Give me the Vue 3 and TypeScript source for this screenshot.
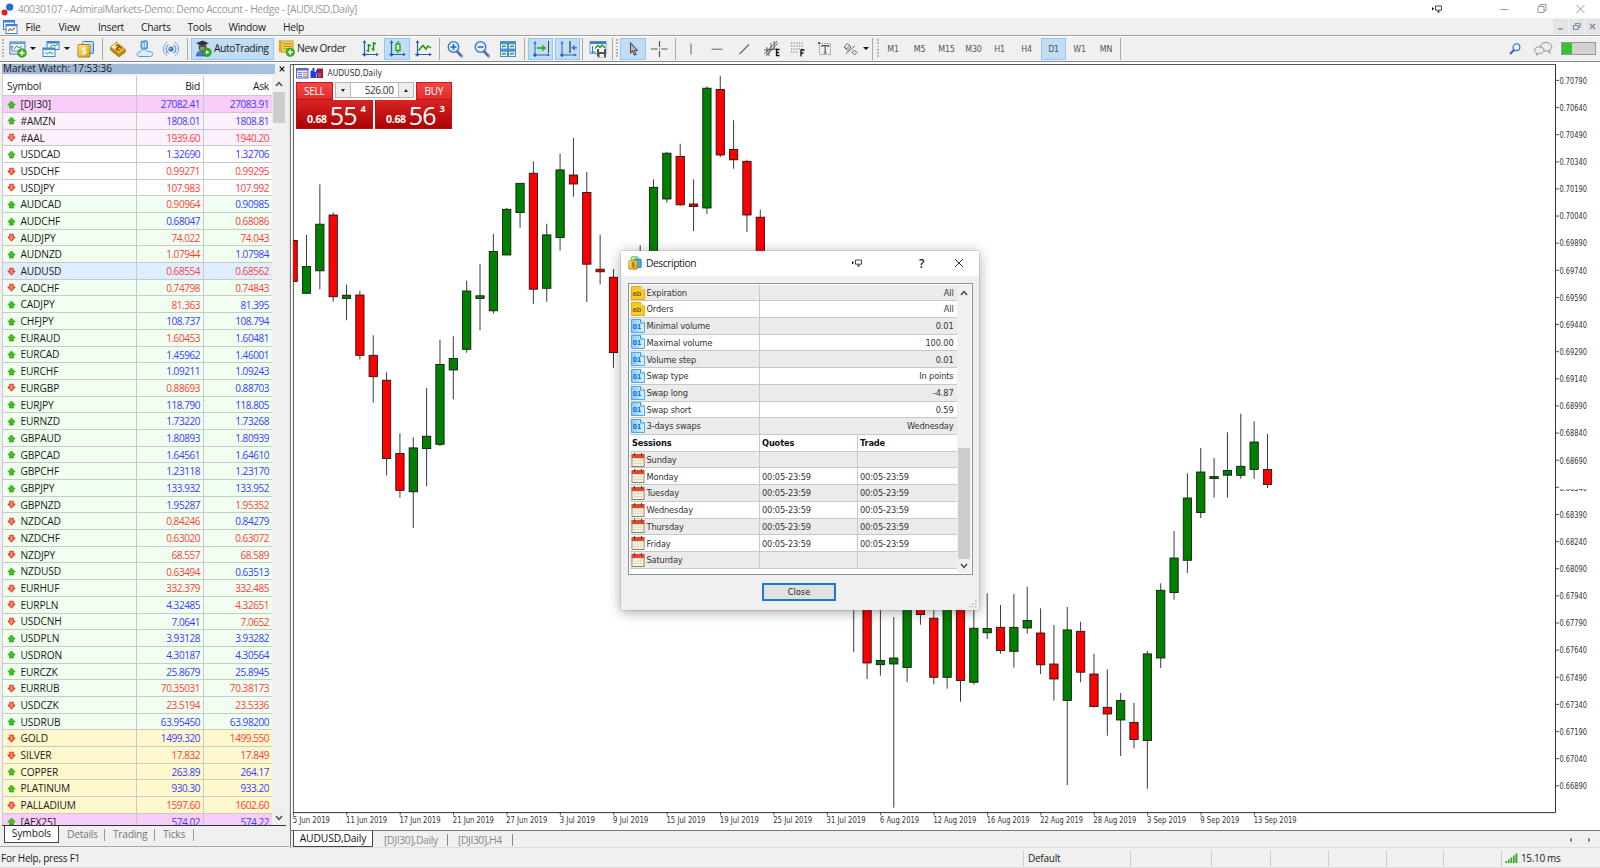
<script setup lang="ts">
interface Slot { k: 'gap' | 'sep' | 'grip' | 'caret' | 'icon' | 'label' | 'auto' | 'order'; w: number; id?: string; on?: boolean }
const ic = (id: string, w: number, on = false): Slot => ({ k: 'icon', w, id, on })
const lb = (id: string, w: number, on = false): Slot => ({ k: 'label', w, id, on })
const gap = (w: number): Slot => ({ k: 'gap', w })
const sep: Slot = { k: 'sep', w: 1 }
const caret = (w: number): Slot => ({ k: 'caret', w })
const grip = (w: number): Slot => ({ k: 'grip', w })

const toolbar: Slot[] = [
  grip(5), ic('newchart', 25), caret(6), ic('profiles', 29), caret(4), ic('dollar', 33), sep,
  ic('tag', 29), ic('person', 25), ic('signal', 28), gap(2), sep, gap(3),
  { k: 'auto', w: 83 }, gap(4), { k: 'order', w: 69 }, gap(10),
  ic('bars', 25), gap(2), ic('candles', 26, true), ic('line', 26), gap(3), sep,
  ic('zoomin', 29), ic('zoomout', 25), ic('tiles', 28), gap(2), sep, gap(3),
  ic('scroll', 25, true), gap(2), ic('shift', 25, true), gap(2), sep, ic('template', 29), sep, gap(2), grip(3), gap(2),
  ic('cursor', 26, true), ic('cross', 26), gap(3), sep,
  ic('vline', 29), ic('hline', 24), ic('trend', 30), ic('channel', 25), ic('fib', 26), ic('text', 29), ic('shapes', 22), caret(9),
  gap(2), sep, gap(3), grip(3),
  lb('M1', 28), lb('M5', 25), lb('M15', 29), lb('M30', 25), lb('H1', 27), lb('H4', 27), gap(1), lb('D1', 25, true), lb('W1', 27), lb('MN', 26),
  gap(1), sep,
]

const menu: [string, number][] = [['File', 33], ['View', 39.5], ['Insert', 43], ['Charts', 46.5], ['Tools', 41], ['Window', 54.5], ['Help', 30]]

// symbol, last tick, bid, bid direction, ask, ask direction, row tint
type Quote = [string, string, string, string, string, string, string]
const quotes: Quote[] = `[DJI30] u 27082.41 u 27083.91 u m
#AMZN u 1808.01 u 1808.81 u p
#AAL d 1939.60 d 1940.20 d p
USDCAD u 1.32690 u 1.32706 u w
USDCHF d 0.99271 d 0.99295 d w
USDJPY d 107.983 d 107.992 d w
AUDCAD u 0.90964 d 0.90985 u g
AUDCHF u 0.68047 u 0.68086 d g
AUDJPY d 74.022 d 74.043 d g
AUDNZD u 1.07944 d 1.07984 u g
AUDUSD d 0.68554 d 0.68562 d s
CADCHF d 0.74798 d 0.74843 d g
CADJPY u 81.363 d 81.395 u g
CHFJPY u 108.737 u 108.794 u g
EURAUD u 1.60453 d 1.60481 u g
EURCAD u 1.45962 u 1.46001 u g
EURCHF u 1.09211 u 1.09243 u g
EURGBP d 0.88693 d 0.88703 u g
EURJPY u 118.790 u 118.805 u g
EURNZD u 1.73220 u 1.73268 u g
GBPAUD u 1.80893 u 1.80939 u g
GBPCAD u 1.64561 u 1.64610 u g
GBPCHF u 1.23118 u 1.23170 u g
GBPJPY u 133.932 u 133.952 u g
GBPNZD d 1.95287 u 1.95352 d g
NZDCAD d 0.84246 d 0.84279 u g
NZDCHF d 0.63020 d 0.63072 d g
NZDJPY d 68.557 d 68.589 d g
NZDUSD u 0.63494 d 0.63513 u g
EURHUF d 332.379 d 332.485 d g
EURPLN d 4.32485 u 4.32651 d g
USDCNH d 7.0641 u 7.0652 d g
USDPLN u 3.93128 u 3.93282 u g
USDRON u 4.30187 u 4.30564 u g
EURCZK u 25.8679 u 25.8945 u g
EURRUB d 70.35031 d 70.38173 d g
USDCZK d 23.5194 d 23.5336 d g
USDRUB u 63.95450 u 63.98200 u g
GOLD d 1499.320 u 1499.550 d y
SILVER d 17.832 d 17.849 d y
COPPER u 263.89 u 264.17 u y
PLATINUM u 930.30 u 933.20 u y
PALLADIUM d 1597.60 d 1602.60 d y
[AEX25] u 574.02 u 574.22 u m`.split('\n').map((l) => l.split(' ') as Quote)

// index, colour, high, top, bottom, low in chart space
type Candle = [number, 'g' | 'r', number, number, number, number]
const candles: Candle[] = [
  [-1, 'r', 240.5, 240.5, 281.5, 281.5], [0, 'g', 235, 266.5, 293.3, 293.3], [1, 'g', 184.3, 224.2, 270.8, 289.3], [2, 'r', 212.3, 215, 296.8, 301.7],
  [3, 'g', 284.7, 295.2, 298.4, 320.3], [4, 'r', 290.7, 295, 355.3, 359.3], [5, 'r', 335.3, 355.3, 376.7, 402.7],
  [6, 'r', 372.3, 380.2, 458.6, 475.3], [7, 'r', 433.3, 453.5, 490.3, 497.7], [8, 'g', 437.3, 447.9, 491.8, 528],
  [9, 'g', 388, 436.2, 448.6, 486.3], [10, 'g', 339.7, 364.4, 444.3, 446], [11, 'g', 336.3, 358.5, 370, 399.3],
  [12, 'g', 280.7, 291, 349.3, 352.7], [13, 'g', 264, 295.8, 298.4, 330.3], [14, 'g', 234, 251.5, 310.8, 313.7],
  [15, 'g', 208, 209.3, 255, 255], [16, 'g', 183.3, 183.3, 212.6, 227.7], [17, 'r', 161.3, 173.2, 289.2, 303.7],
  [18, 'g', 223.7, 234.9, 288.3, 301.7], [19, 'g', 153.7, 169.9, 237.5, 250.7], [20, 'r', 138, 175, 184, 196.7],
  [21, 'r', 172, 192.4, 264.2, 302], [22, 'r', 234.7, 269.2, 271.8, 284.3], [23, 'r', 269, 277.2, 352.6, 367.7],
  [25, 'r', 245.3, 262, 280, 290], [26, 'g', 179.3, 187.3, 300, 310], [27, 'g', 152, 153.2, 199, 202.7],
  [28, 'r', 143.7, 156.5, 204.8, 206], [29, 'r', 179.3, 204, 206.6, 231], [30, 'g', 86.3, 88.2, 208, 214],
  [31, 'r', 76, 89.5, 155, 157], [32, 'r', 120.3, 149.5, 159.8, 168.7], [33, 'r', 159.7, 161.3, 215, 232], [34, 'r', 209.7, 217.2, 300, 310],
  [41, 'r', 560, 570, 590, 652.3], [42, 'r', 580, 590, 663, 679], [43, 'g', 590, 660.5, 664.7, 675.7],
  [44, 'g', 617, 658, 664, 807.7], [45, 'g', 580, 590, 667.5, 682.3], [46, 'r', 580, 590, 614.6, 624.7],
  [47, 'r', 600, 618.2, 677.3, 684.3], [48, 'g', 590, 600, 677.3, 688.7], [49, 'r', 590, 600, 680.6, 701.7],
  [50, 'g', 600, 628.2, 682.3, 684.7], [51, 'g', 593.3, 628.4, 632.8, 639], [52, 'r', 605, 627.3, 650.6, 653.7],
  [53, 'g', 594, 627.3, 651.3, 667.7], [54, 'g', 586.7, 620.5, 628, 633.7], [55, 'r', 608.3, 633, 664.8, 674],
  [56, 'r', 625, 664, 679, 700.7], [57, 'g', 607, 629.9, 700.5, 785], [58, 'r', 621.7, 631.3, 672.2, 682.3],
  [59, 'r', 653.7, 674, 706.6, 707.3], [60, 'r', 669.3, 707.3, 714, 735.7], [61, 'g', 693, 700.6, 720, 756],
  [62, 'r', 703, 722.5, 739.6, 748.3], [63, 'g', 651, 653.9, 740.6, 788.7], [64, 'g', 583.3, 590.3, 658, 668],
  [65, 'g', 531, 558, 592.6, 599.7], [66, 'g', 473.3, 498, 560.3, 573], [67, 'g', 448, 472, 512.6, 518],
  [68, 'g', 458, 476.6, 478.6, 497.7], [69, 'g', 432.3, 470.5, 475.2, 497.7], [70, 'g', 413.7, 466.3, 475.3, 478.7],
  [71, 'g', 421.3, 442, 469.5, 478.7], [72, 'r', 434, 469.5, 484.5, 488],
]
const cx = (i: number) => 306.5 + 13.347 * i

const prices = Array.from({ length: 27 }, (_, i) => ({ y: 80.4 + i * 27.13, t: (0.7079 - i * 0.0015).toFixed(5), cut: i === 15 }))
const dates = ['5 Jun', '11 Jun', '17 Jun', '21 Jun', '27 Jun', '3 Jul', '9 Jul', '15 Jul', '19 Jul', '25 Jul', '31 Jul', '6 Aug', '12 Aug', '16 Aug', '22 Aug', '28 Aug', '3 Sep', '9 Sep', '13 Sep']
  .map((d, i) => ({ x: 293.4 + i * 53.39, t: d + ' 2019', w: (d.length === 5 ? 37.3 : 41) + (d.endsWith('Jul') ? -2 : 0) + (/Aug|Sep/.test(d) ? 1.8 : 0) }))

const specs: [string, string, string][] = [
  ['ab', 'Expiration', 'All'], ['ab', 'Orders', 'All'], ['num', 'Minimal volume', '0.01'], ['num', 'Maximal volume', '100.00'],
  ['num', 'Volume step', '0.01'], ['num', 'Swap type', 'In points'], ['num', 'Swap long', '-4.87'], ['num', 'Swap short', '0.59'], ['num', '3-days swaps', 'Wednesday'],
]
const days = ['Sunday', 'Monday', 'Tuesday', 'Wednesday', 'Thursday', 'Friday', 'Saturday']
  .map((d) => ({ d, t: d[0] === 'S' ? '' : '00:05-23:59' }))
const statusCells = [107, 81, 59, 58, 58, 57, 58]
</script>

<template>
  <div class="app">
    <svg class="defs" width="0" height="0">
      <defs>
        <linearGradient id="gold" x1="0" y1="0" x2="1" y2="1"><stop offset="0" stop-color="#ffe98a" /><stop offset="1" stop-color="#d59c12" /></linearGradient>
        <linearGradient id="blue" x1="0" y1="0" x2="1" y2="1"><stop offset="0" stop-color="#eaf7ff" /><stop offset="1" stop-color="#8cc8f4" /></linearGradient>
        <linearGradient id="page" x1="0" y1="0" x2="1" y2="0"><stop offset="0" stop-color="#84c8ff" /><stop offset="1" stop-color="#dff2ff" /></linearGradient>
        <symbol id="newchart" viewBox="0 0 18 18">
          <rect x="1" y="2" width="15" height="12" fill="#e6f5ff" stroke="#3f7fc0" /><path d="M1.5 3.2h14" stroke="#5b9bd5" stroke-width="1.6" />
          <path d="M3 11V6M2 7.5l1-1.5 1 1.5M3 11h7" stroke="#666" fill="none" stroke-width=".8" /><path d="M5 9l3-3 2 2 3-2" stroke="#2f9e3a" fill="none" />
          <circle cx="13" cy="13" r="4.3" fill="#3cb521" stroke="#22840f" stroke-width=".7" /><path d="M13 10.4v5.2M10.4 13h5.2" stroke="#fff" stroke-width="1.5" />
        </symbol>
        <symbol id="profiles" viewBox="0 0 18 18">
          <rect x="5" y="1.5" width="12" height="8" fill="#eef8ff" stroke="#3f86cf" /><path d="M5 2.6h12" stroke="#3f86cf" stroke-width="1.8" /><path d="M8 7l3-2 2 1 3-2" stroke="#2f9e3a" fill="none" />
          <rect x="1" y="8" width="12" height="8.5" fill="#eef8ff" stroke="#3f86cf" /><path d="M1 9h12" stroke="#3f86cf" stroke-width="1.8" /><path d="M3 12.2l2 2 3-2 3 1.5" stroke="#2f9e3a" fill="none" />
        </symbol>
        <symbol id="dollar" viewBox="0 0 18 18">
          <rect x="5.500" y="1.500" width="11" height="12" rx="1" fill="url(#blue)" stroke="#3a7bd0" /><rect x="1" y="4.500" width="12" height="12.500" rx="1" fill="url(#gold)" stroke="#b78205" />
          <path d="M9.200 8.200c-1-1-4-.8-4 .8s4 1 4 2.800-3 1.800-4.300.6M7.200 6.600v8.300" stroke="#fff8d0" stroke-width="1.300" fill="none" />
        </symbol>
        <symbol id="dollar2" viewBox="0 0 18 18">
          <rect x="4" y="1" width="9" height="9" rx="1" fill="#b8efa4" stroke="#46b53b" /><rect x="8" y="4" width="9" height="11" rx="1" fill="#47a5ee" stroke="#2478c8" /><rect x="1" y="6" width="11" height="11" rx="1" fill="url(#gold)" stroke="#b78205" />
          <path d="M8.500 9c-1-.8-3.500-.600-3.500.6s3.500 1 3.500 2.400-2.500 1.500-3.800.4M6.700 7.600v7.600" stroke="#7c5a10" stroke-width="1" fill="none" />
        </symbol>
        <symbol id="tag" viewBox="0 0 18 18">
          <path d="M1.500 7l6-5 8.500 7 .5 3-6.500 5L1.500 10z" fill="#b98412" stroke="#8c610a" stroke-width=".6" /><path d="M1.500 7l6-5 8.800 7-6 5z" fill="url(#gold)" stroke="#c9952a" stroke-width=".6" />
          <circle cx="4.800" cy="6.800" r="1.200" fill="#fff" /><path d="M7 5.500c2-1.500 4 1 1.500 2.500s0 3 2 1.500M10 6l2.500 2.500" stroke="#5e400a" stroke-width="1.100" fill="none" />
        </symbol>
        <symbol id="person" viewBox="0 0 18 18">
          <path d="M5 1.500l5-1 1.500 1v7l-5 1-1.500-1.500z" fill="#6fb3ee" stroke="#3477bf" stroke-width=".7" /><path d="M7 3v4.500M9.500 2.600v4.400" stroke="#fff" stroke-width="1" />
          <path d="M3 16.500c-3-1-2-5 1-4.500C5 9 10 8.500 11.500 11.500c4-.5 6 1.500 5 3.600-.6 1.100-1.500 1.400-3 1.400z" fill="#dcecff" stroke="#5b96d6" stroke-width="1" />
        </symbol>
        <symbol id="signal" viewBox="0 0 18 18">
          <g fill="none" stroke="#7aa5d8"><path d="M5.500 2.200a7.700 7.700 0 0 0 0 13.600M12.500 2.200a7.700 7.700 0 0 1 0 13.600" /><path d="M6.500 4.700a5 5 0 0 0 0 8.600M11.500 4.700a5 5 0 0 1 0 8.600" stroke="#5e94d4" stroke-width="1.200" /></g>
          <circle cx="9" cy="9" r="2.600" fill="#2e76cf" /><circle cx="8.400" cy="8.400" r="1" fill="#a7cdf5" />
        </symbol>
        <symbol id="autotrade" viewBox="0 0 18 18">
          <path d="M1 3.500L8 .5l6.500 3L8 6.500z" fill="#333" /><path d="M4 5v4.500c1 3 7 3 8 0V5L8 6.500z" fill="#4c4c4c" /><path d="M5.500 7.500h5v2.500c-1 2-4 2-5 0z" fill="#b98e62" />
          <path d="M1.500 17C1.500 12.500 5 11.500 8 11.500s6 1 6 5.500z" fill="#3d7fc9" stroke="#27599a" stroke-width=".6" /><circle cx="12.800" cy="13" r="4.300" fill="#33b01c" stroke="#1d7d10" stroke-width=".7" /><path d="M11.600 10.800l3.600 2.200-3.600 2.200z" fill="#fff" />
        </symbol>
        <symbol id="neworder" viewBox="0 0 18 18">
          <path d="M1 1h15v12H4z" fill="#f6d455" stroke="#b58a14" stroke-width=".8" /><path d="M1 1h3v12H1z" fill="#d9a920" /><path d="M5.500 4h9M5.500 6.700h9M5.500 9.400h6" stroke="#9a7412" stroke-width=".9" />
          <circle cx="13" cy="13" r="4.300" fill="#3cb521" stroke="#22840f" stroke-width=".7" /><path d="M13 10.400v5.200M10.400 13h5.200" stroke="#fff" stroke-width="1.500" />
        </symbol>
        <symbol id="axes" viewBox="0 0 18 18"><path d="M3.500 1.500v15M1 14.500h15" stroke="#2b5fb0" stroke-width="1.200" fill="none" /><path d="M3.500 0L1.700 3h3.600zM18 14.500l-3-1.800v3.600z" fill="#2b5fb0" /><circle cx="3.500" cy="14.500" r="1.500" fill="#2b5fb0" /></symbol>
        <symbol id="bars" viewBox="0 0 18 18"><use href="#axes" /><path d="M7.500 4v8M5.500 10.500h2M7.500 5.500h2.500M12.500 2v9M10.500 9h2M12.500 3.500H15" stroke="#1d9418" stroke-width="1.500" fill="none" /></symbol>
        <symbol id="candles" viewBox="0 0 18 18"><use href="#axes" /><path d="M10 1v12" stroke="#1d9418" stroke-width="1.200" /><rect x="8" y="4" width="4" height="6.500" fill="#c9f3ba" stroke="#1d9418" stroke-width="1.200" /></symbol>
        <symbol id="line" viewBox="0 0 18 18"><use href="#axes" /><path d="M4.500 10.500L9 5.500l3 3.500 2-3 3 2" stroke="#1d9418" stroke-width="1.500" fill="none" /></symbol>
        <symbol id="zoomin" viewBox="0 0 18 18"><path d="M10.500 10.500l5 5.500" stroke="#8a98ac" stroke-width="3.200" stroke-linecap="round" /><path d="M10.500 11l4.500 5" stroke="#3a66b0" stroke-width="1.500" /><circle cx="7.500" cy="7" r="5.300" fill="#ddf0ff" stroke="#2f74cc" stroke-width="1.300" /><path d="M7.500 4v6M4.500 7h6" stroke="#235fb5" stroke-width="1.400" /></symbol>
        <symbol id="zoomout" viewBox="0 0 18 18"><path d="M10.500 10.500l5 5.500" stroke="#8a98ac" stroke-width="3.200" stroke-linecap="round" /><path d="M10.500 11l4.500 5" stroke="#3a66b0" stroke-width="1.500" /><circle cx="7.500" cy="7" r="5.300" fill="#ddf0ff" stroke="#2f74cc" stroke-width="1.300" /><path d="M4.500 7h6" stroke="#235fb5" stroke-width="1.400" /></symbol>
        <symbol id="tiles" viewBox="0 0 18 18"><rect x="1" y="1" width="16" height="16" fill="#4a8ed4" /><path d="M2 4.200h6v4.200H2zM10 4.200h6v4.200h-6zM2 11.800h6V16H2zM10 11.800h6V16h-6z" fill="#e9f8ff" /><path d="M3 7.200l2-1.500 2 1M11 7.200l2-1.500 2 1M3 14.700l2-1.500 2 1M11 14.700l2-1.500 2 1" stroke="#1d9418" fill="none" stroke-width="1.200" /></symbol>
        <symbol id="scroll" viewBox="0 0 18 18"><path d="M3 2v15M1 15h15.500" stroke="#2b5fb0" fill="none" /><path d="M16.500 1v12" stroke="#444" /><circle cx="3" cy="15" r="1.400" fill="#2b5fb0" /><path d="M3 1L1.700 3.500h2.600zM18 15l-2.500-1.500v3z" fill="#2b5fb0" /><path d="M5 7h5V4.500l4.500 3.500-4.500 3.500V9H5z" fill="#3fb52a" /></symbol>
        <symbol id="shift" viewBox="0 0 18 18"><path d="M3 2v15M1 15h15.500" stroke="#2b5fb0" fill="none" /><path d="M11 1v12" stroke="#333" stroke-width="1.200" /><circle cx="3" cy="15" r="1.400" fill="#2b5fb0" /><path d="M3 1L1.700 3.500h2.600zM18 15l-2.500-1.500v3z" fill="#2b5fb0" /><path d="M18 7h-2V4.800l-4 3 4 3V8.600h2z" fill="#3b80e0" /></symbol>
        <symbol id="template" viewBox="0 0 18 18"><rect x="1" y="1.500" width="16" height="12" fill="#fff" stroke="#6d9fd2" /><path d="M1 2.800h16" stroke="#3f7fc0" stroke-width="2.600" /><path d="M3.500 6v7M2 12h5" stroke="#3f6fa8" /><path d="M6 8.500l3-3 2 2 2-2.500 3 3" stroke="#1d9418" stroke-width="1.300" fill="none" /><path d="M8 9h9v8.500H9.500L8 16z" fill="#555" /><path d="M10 9h5v3h-5zM10.500 14h4.500v3.500h-4.500z" fill="#f4f4f4" /></symbol>
        <symbol id="cursor" viewBox="0 0 18 18"><path d="M6.500 3v10l2.200-2 1.600 4 1.800-.8-1.700-3.700h3z" fill="#bbb" stroke="#555" stroke-width="1.100" /></symbol>
        <symbol id="cross" viewBox="0 0 18 18"><path d="M9.500 1v6M9.500 11v6M1 9h6.500M11.500 9h6" stroke="#555" stroke-width="1.200" /><path d="M9 9h1" stroke="#555" /></symbol>
        <symbol id="vline" viewBox="0 0 18 18"><path d="M9 3.500v11" stroke="#666" stroke-width="1" /></symbol>
        <symbol id="hline" viewBox="0 0 18 18"><path d="M3.500 9.200h11" stroke="#666" stroke-width="1" /></symbol>
        <symbol id="trend" viewBox="0 0 18 18"><path d="M4.500 14L14 4.500" stroke="#666" stroke-width="1.100" /></symbol>
        <symbol id="channel" viewBox="0 0 18 18"><path d="M1 14L10 5M3 16L15 3M8 3v8M11 1v9M4 7v8M6 16V9M14 1l-3 4M1 10l13-1" stroke="#555" stroke-width=".9" /><path d="M16.500 9.500h-3v6h3M13.500 12.500H16" stroke="#111" stroke-width="1.300" fill="none" /></symbol>
        <symbol id="fib" viewBox="0 0 18 18"><path d="M3 3h12M3 6h12M3 9h12M3 12h7" stroke="#777" stroke-dasharray="1.300 1.300" /><path d="M16.500 10H13v6.500M13 13h2.500" stroke="#111" stroke-width="1.300" fill="none" /></symbol>
        <symbol id="text" viewBox="0 0 18 18"><rect x="3.500" y="3.500" width="11" height="11" fill="none" stroke="#888" stroke-dasharray="1.300 1" /><path d="M6 7V5.700h6.500V7M9.200 5.700V13M7.700 13h3" stroke="#555" stroke-width="1.200" fill="none" /><circle cx="3" cy="3" r="1" fill="#222" /></symbol>
        <symbol id="shapes" viewBox="0 0 18 18"><path d="M3 7l3.500-3.500L10 7l-3.500 3.500zM3.500 7l2 2 3.500-4M5 13.500L14 6" stroke="#666" fill="none" stroke-width="1" /><path d="M13.500 10l2.500 2.500-2.500 2.500-2.500-2.500z" fill="#ddd" stroke="#777" /></symbol>
        <symbol id="up" viewBox="0 0 9 9"><path d="M4.500 1L8.200 4.900H6.400V8H2.600V4.900H.8z" fill="#3ec41c" stroke="#2a9c12" stroke-width=".7" stroke-linejoin="round" /></symbol>
        <symbol id="down" viewBox="0 0 9 9"><path d="M4.500 7.800L8 4.100H6.200V1.200H2.800v2.900H1z" fill="#ff8a68" stroke="#e2402a" stroke-width="1.100" stroke-linejoin="round" /></symbol>
        <symbol id="ab" viewBox="0 0 14 14"><path d="M.5.5h9l4 3.500v9.500h-13z" fill="#f9ca28" stroke="#e4ab10" /><path d="M9.500.5V4h4" fill="#fff0a8" stroke="#e4ab10" stroke-width=".7" /><text x="1.600" y="10" class="glyph" fill="#8d6304">ab</text></symbol>
        <symbol id="num" viewBox="0 0 14 14"><path d="M.5.5h9l4 3.500v9.500h-13z" fill="url(#page)" stroke="#4aa8ee" /><path d="M9.500.5V4h4" fill="#fff" stroke="#2b95ea" /><text x="1.800" y="9.800" class="glyph" fill="#0a63c4">01</text></symbol>
        <symbol id="cal" viewBox="0 0 13 14"><rect x=".5" y="1.500" width="12" height="12" fill="#fffdf2" stroke="#8d8262" /><path d="M.2 1.200h12.600v4H.2z" fill="#e04a28" /><path d="M3 0v3M10 0v3" stroke="#7d2a1a" stroke-width="1" /><path d="M3.500 5.500V13M6.500 5.500V13M9.500 5.500V13M1 8h11M1 10.500h11" stroke="#d8d0b4" stroke-width=".7" /></symbol>
        <symbol id="pin" viewBox="0 0 10 8"><path d="M0 2l2 1.800L0 5.600z" fill="#000" /><path d="M3.500 1h6v4.200h-6zM6.500 5.200V7M5 7h3" fill="none" stroke="#333" stroke-width=".9" /></symbol>
      </defs>
    </svg>

    <header class="title">
      <svg class="logo" width="13" height="13"><circle cx="8.700" cy="4.200" r="3.600" fill="#1b6fe0" /><circle cx="3.500" cy="9.500" r="3" fill="#d91e28" /></svg>
      <span class="title-text">40030107 - AdmiralMarkets-Demo: Demo Account - Hedge - [AUDUSD,Daily]</span>
      <svg class="title-pin" width="10" height="8"><use href="#pin" /></svg>
      <svg class="winbtns" width="88" height="12"><g fill="none" stroke="#999"><path d="M.5 6.500h8M38 3.500h6v6h-6zM40 3.500v-2h6v6h-2M76.500 2l8 8M84.500 2l-8 8" /></g></svg>
    </header>

    <nav class="menu">
      <svg class="menu-logo" width="15" height="14"><rect x=".5" y=".5" width="11" height="9" fill="#e7f3ff" stroke="#3a84d8" /><path d="M.5 1.500h11" stroke="#3a84d8" stroke-width="2" /><rect x="3" y="4.500" width="11" height="9" fill="#fff" stroke="#3a84d8" /><path d="M3 5.500h11" stroke="#3a84d8" stroke-width="1.500" /><path d="M5 11l2-2 2 1 3-2" stroke="#e0562a" fill="none" stroke-width="1.200" /></svg>
      <span v-for="[m, w] in menu" :key="m" class="menu-item" :style="{ width: w + 'px' }">{{ m }}</span>
      <div class="mdi">
        <svg width="15" height="15"><path d="M5 10h5" stroke="#7d93ab" stroke-width="1.500" /></svg>
        <svg width="15" height="15"><path d="M6.500 6V4.500h4.500v4H9M4.500 6.500H9v4H4.500z" stroke="#7d93ab" stroke-width="1.200" fill="none" /></svg>
        <svg width="15" height="15"><path d="M5 5l5 5M10 5l-5 5" stroke="#7d93ab" stroke-width="1.600" /></svg>
      </div>
    </nav>

    <div class="toolbar">
      <div v-for="(s, i) in toolbar" :key="i" class="slot" :class="[s.k, { on: s.on }]" :style="{ width: s.w + 'px' }">
        <svg v-if="s.k === 'icon'" width="18" height="18"><use :href="'#' + s.id" /></svg>
        <template v-else-if="s.k === 'label'">{{ s.id }}</template>
        <template v-else-if="s.k === 'auto'"><svg width="17" height="17"><use href="#autotrade" /></svg><span>AutoTrading</span></template>
        <template v-else-if="s.k === 'order'"><svg width="17" height="17"><use href="#neworder" /></svg><span>New Order</span></template>
      </div>
      <div class="tool-right">
        <svg width="12" height="12"><circle cx="7.500" cy="4.200" r="3.300" fill="#fff" stroke="#3a78d8" stroke-width="1.300" /><path d="M5 7L1 11" stroke="#2b62c0" stroke-width="2" /></svg>
        <svg width="19" height="14"><g fill="#ececec" stroke="#8b8b8b" stroke-width=".9"><ellipse cx="12" cy="4.800" rx="5.800" ry="4.300" /><path d="M14 9l2 2.500-.2-3.500" /><ellipse cx="5.300" cy="8.200" rx="4.600" ry="3.300" /><path d="M3 11l-.5 2.200L5.500 11.500" /></g></svg>
        <div class="meter"><div class="meter-fill"></div></div>
      </div>
    </div>

    <main class="work">
      <section class="watch">
        <div class="watch-title"><span>Market Watch: 17:53:36</span><svg width="6" height="6"><path d="M.7.7l4.600 4.600M5.300.7L.7 5.300" stroke="#111" stroke-width="1.200" /></svg></div>
        <div class="watch-box">
          <div class="watch-grid">
            <div class="qhead"><span class="c1">Symbol</span><span class="c2">Bid</span><span class="c3">Ask</span></div>
            <div v-for="q in quotes" :key="q[0]" class="qrow" :class="'t-' + q[6]">
              <span class="c1"><svg width="9" height="9"><use :href="q[1] === 'u' ? '#up' : '#down'" /></svg>{{ q[0] }}</span>
              <span class="c2" :class="q[3]">{{ q[2] }}</span>
              <span class="c3" :class="q[5]">{{ q[4] }}</span>
            </div>
          </div>
          <div class="vscroll">
            <svg width="8" height="6"><path d="M1 5l3-3.500L7 5" fill="none" stroke="#444" stroke-width="1.400" /></svg>
            <div class="thumb"></div>
            <svg class="dn" width="8" height="6"><path d="M1 1l3 3.500L7 1" fill="none" stroke="#444" stroke-width="1.400" /></svg>
          </div>
        </div>
        <div class="watch-tabs"><span class="wt active">Symbols</span><span class="wt w2">Details</span><span class="wt w3">Trading</span><span class="wt w4">Ticks</span></div>
      </section>

      <section class="chart">
        <svg class="plot" width="1311" height="767" viewBox="289 63 1311 767">
          <rect x="289" y="63" width="1311" height="767" fill="#fff" />
          <path d="M290.300 830V64.500H1555.500M293.400 65V812" fill="none" stroke="#555" stroke-width="1" />
          <path d="M1555.500 64V812.600H293" fill="none" stroke="#333" stroke-width="1" />
          <clipPath id="area"><rect x="293" y="65" width="1262" height="747" /></clipPath>
          <g clip-path="url(#area)">
            <g v-for="c in candles" :key="c[0]">
              <path :d="`M${cx(c[0])} ${c[2]}V${c[5]}`" stroke="#111" stroke-width=".83" />
              <rect :x="cx(c[0]) - 4.150" :y="c[3]" width="8.300" :height="c[4] - c[3]" :fill="c[1] === 'g' ? '#008000' : '#ff0000'" stroke="#111" stroke-width=".83" />
            </g>
          </g>
          <g v-for="p in prices" :key="p.t">
            <path :d="`M1555 ${p.y}h4`" stroke="#333" stroke-width=".83" />
            <clipPath v-if="p.cut" id="cutoff"><rect x="1555" y="489" width="40" height="3" /></clipPath>
            <text x="1559.500" :y="p.y + 3.300" class="axis" textLength="27.500" lengthAdjust="spacingAndGlyphs" :clip-path="p.cut ? 'url(#cutoff)' : undefined">{{ p.t }}</text>
          </g>
          <g v-for="d in dates" :key="d.t">
            <path :d="`M${d.x} 812v3.500`" stroke="#333" stroke-width=".83" />
            <text :x="d.x - .7" y="823.300" class="axis" :textLength="d.w" lengthAdjust="spacingAndGlyphs">{{ d.t }}</text>
          </g>
          <g transform="translate(296 68)"><rect x=".5" y=".5" width="11.500" height="9.500" fill="#e9e9ff" stroke="#5566c0" /><path d="M1 1.500h11" stroke="#5b6bd0" stroke-width="2" /><path d="M2 4.500h4M2 6.500h4M2 8.500h4" stroke="#4a5fd0" stroke-width=".8" /><path d="M7 4.500h4M7 6.500h4M7 8.500h4" stroke="#e06a5a" stroke-width=".8" />
            <path d="M14.500 2.500h2V0h2v4h2v6h-6z" fill="#1f3fe0" /><path d="M21 .5h6V10h-6z" fill="#a81c2c" /><path d="M20 2h4v3h-4z" fill="#4a3a8c" /><path d="M22 6h3M22 8h3" stroke="#e88" stroke-width=".8" /></g>
          <text x="327.500" y="76.300" class="axis" textLength="54.500" lengthAdjust="spacingAndGlyphs">AUDUSD,Daily</text>
        </svg>
        <div class="trade">
          <div class="trade-top">
            <span class="side">SELL</span>
            <div class="vol"><span class="spin"><i class="tri"></i></span><span class="num">526.00</span><span class="spin"><i class="tri upward"></i></span></div>
            <span class="side">BUY</span>
          </div>
          <div class="trade-low">
            <div class="px"><b>0.68</b><span class="big">55</span><sup>4</sup></div>
            <div class="px"><b>0.68</b><span class="big">56</span><sup>3</sup></div>
          </div>
        </div>
        <div class="chart-tabs"><span class="ct active">AUDUSD,Daily</span><span class="ct c-b">[DJI30],Daily</span><span class="ct c-c">[DJI30],H4</span>
          <svg class="tab-arrows" width="26" height="8"><path d="M4 1.500L1.500 4 4 6.500zM20 1.500L22.500 4 20 6.500z" fill="#777" /></svg></div>
      </section>
    </main>

    <footer class="status">
      <span class="help">For Help, press F1</span>
      <span v-for="(w, i) in statusCells" :key="i" class="cell" :style="{ width: w + 'px' }">{{ i === 0 ? 'Default' : '' }}</span>
      <span class="cell ping"><svg width="13" height="10"><path d="M.5 10V8h1.500v2zM3 10V6.500h1.700V10zM5.500 10V4.500h1.700V10zM8 10V2.500h1.700V10zM10.500 10V.500h1.800V10z" fill="#2fa41c" /></svg>15.10 ms</span>
    </footer>

    <div class="dialog">
      <div class="dlg-title">
        <svg class="dlg-icon" width="14" height="14"><use href="#dollar2" /></svg><span class="dlg-name">Description</span>
        <svg class="dlg-pin" width="10" height="8"><use href="#pin" /></svg><span class="q">?</span>
        <svg class="dlg-x" width="10" height="10"><path d="M1 1l8 8M9 1L1 9" stroke="#333" stroke-width="1" /></svg>
      </div>
      <div class="list">
        <div class="rows">
          <div v-for="(s, i) in specs" :key="s[1]" class="row" :class="{ alt: i % 2 === 0 }">
            <span class="r1"><svg width="14" height="14"><use :href="'#' + s[0]" /></svg>{{ s[1] }}</span><span class="rv">{{ s[2] }}</span>
          </div>
          <div class="row head"><span class="r1">Sessions</span><span class="r2">Quotes</span><span class="r3">Trade</span></div>
          <div v-for="(s, i) in days" :key="s.d" class="row" :class="{ alt: i % 2 === 0 }">
            <span class="r1"><svg width="14" height="14"><use href="#cal" /></svg>{{ s.d }}</span><span class="r2">{{ s.t }}</span><span class="r3">{{ s.t }}</span>
          </div>
        </div>
        <div class="dscroll">
          <svg width="8" height="6"><path d="M1 5l3-3.500L7 5" fill="none" stroke="#444" stroke-width="1.400" /></svg>
          <div class="dthumb"></div>
          <svg width="8" height="6"><path d="M1 1l3 3.500L7 1" fill="none" stroke="#444" stroke-width="1.400" /></svg>
        </div>
      </div>
      <button class="close">Close</button>
      <svg class="resize" width="8" height="8"><path d="M6 0h1.500v1.500H6zM3 3h1.500v1.500H3zM6 3h1.500v1.500H6zM0 6h1.500v1.500H0zM3 6h1.500v1.500H3zM6 6h1.500v1.500H6z" fill="#bbb" /></svg>
    </div>
  </div>
</template>

<style>
html, body { margin: 0; overflow: hidden; }
</style>
<style scoped>
* { box-sizing: border-box; }
.app { position: relative; width: 1600px; height: 868px; display: flex; flex-direction: column; background: #f0f0f0; color: #1a1a1a; overflow: hidden; font: 10.300px/1 "Open Sans", "Noto Sans", sans-serif; letter-spacing: -.25px; white-space: nowrap; }
svg { display: block; flex: none; }
.defs { position: absolute; }
.title { height: 18px; flex: none; background: #fff; display: flex; align-items: center; padding-left: 1px; color: #999; }
.logo { margin-right: 4px; }
.title-text { width: 1414px; font-size: 10.300px; letter-spacing: -.36px; }
.title-pin { margin-right: 58px; }
.menu { height: 17px; flex: none; display: flex; align-items: center; padding-left: 3px; }
.menu-logo { margin-right: 7.500px; }
.menu-item { font-size: 10.300px; letter-spacing: -.3px; padding-top: 1px; }
.mdi { margin-left: auto; display: flex; gap: 1px; }
.mdi svg { background: #e4e4e4; }
.toolbar { height: 27px; flex: none; display: flex; align-items: center; border-top: 1px solid #a0a0a0; border-bottom: 1px solid #888; box-shadow: inset 0 1px #fff; }
.slot { height: 22px; flex: none; display: flex; align-items: center; justify-content: center; }
.sep { background: #aaa; }
.grip::before { content: ""; width: 2px; height: 20px; background: repeating-linear-gradient(#b5b5b5 0 1.700px, transparent 1.700px 3.300px); }
.caret::before { content: ""; border: 3px solid transparent; border-top: 3.500px solid #111; border-bottom: 0; }
.tri { border: 2.500px solid transparent; border-top: 3px solid #222; border-bottom: 0; }
.on, .auto { background: #c1dcf3; border: 1px solid #90c8f6; }
.auto { justify-content: flex-start; padding-left: 3px; gap: 2px; letter-spacing: -.42px; }
.order { justify-content: flex-start; gap: 2px; letter-spacing: -.44px; }
.label { font: 8.800px "DejaVu Sans Condensed", "DejaVu Sans", sans-serif; letter-spacing: -.2px; color: #555; }
.tool-right { margin-left: auto; display: flex; align-items: center; padding-right: 4px; }
.tool-right svg:first-child { margin-right: 13px; }
.meter { width: 35px; height: 13px; border: 1px solid #999; background: #d2d2d2; margin-left: 8px; }
.meter-fill { width: 10px; height: 11px; background: #35c335; }
.work { flex: none; height: 785px; display: flex; border-top: 1px solid #fff; }
.watch { width: 289px; padding-top: 1px; border-bottom: 1px solid #aaa; flex: none; display: flex; flex-direction: column; }
.watch-title { height: 10px; margin-left: 2px; width: 283px; display: flex; align-items: center; justify-content: space-between; font-size: 10px; letter-spacing: -.04px; }
.watch-title span { width: 273px; height: 10px; line-height: 9px; background: linear-gradient(90deg, #9ab3cf, #a6c2df); padding-left: 1px; }
.watch-box { margin: 2px 0 0 2px; width: 284px; height: 750px; display: flex; border-bottom: 1px solid #333; }
.watch-grid { width: 270px; height: 749px; overflow: hidden; background: #fff; border-left: 1px solid #ccc; }
.qhead, .qrow { display: flex; height: 16.700px; border-bottom: 1px solid #c9c9c9; }
.qhead { height: 20.200px; }
.qrow span, .qhead span { display: flex; align-items: center; height: 100%; padding-top: .5px; }
.qrow .c1, .qhead .c1 { width: 133px; padding-left: 4px; gap: 4.500px; font-size: 10.200px; letter-spacing: -.13px; }
.c2 { width: 67px; justify-content: flex-end; padding-right: 3px; border-left: 1px solid #c9c9c9; }
.c3 { width: 69px; justify-content: flex-end; padding-right: 3px; border-left: 1px solid #c9c9c9; }
.qrow .c2, .qrow .c3 { font-size: 10px; letter-spacing: -.44px; }
.u { color: #3a3aff; }
.d { color: #ff3c3c; }
.t-m { background: #f9cdf9; }
.t-p { background: #fdf0fd; }
.t-g { background: #f0fff0; }
.t-s { background: #e0efff; }
.t-y { background: #fff8cc; }
.vscroll { width: 14px; margin-left: 0; display: flex; flex-direction: column; align-items: center; padding-top: 5px; }
.thumb { width: 12px; height: 31px; background: #cdcdcd; margin-top: 5px; }
.dn { margin-top: auto; margin-bottom: 4px; }
.watch-tabs { display: flex; margin-left: 4px; height: 17px; color: #777; align-items: center; letter-spacing: -.3px; }
.wt { line-height: 15px; }
.wt.active { width: 55px; height: 17px; margin-top: -1px; background: #fff; border: 1px solid #444; border-top: 0; text-align: center; color: #222; letter-spacing: -.15px; }
.w2, .w3, .w4 { border-right: 1px solid #999; height: 12px; line-height: 11px; }
.w2 { width: 46px; padding-left: 8px; }
.w3 { width: 50px; padding-left: 8px; }
.w4 { width: 39px; padding-left: 8px; }
.chart { width: 1311px; position: relative; display: flex; flex-direction: column; }
.axis { font: 9px "DejaVu Sans Condensed", "DejaVu Sans", sans-serif; letter-spacing: 0; fill: #333; }
.trade { position: absolute; left: 7px; top: 19px; width: 156px; color: #fff; }
.trade-top { display: flex; justify-content: space-between; height: 18px; }
.side { width: 36.500px; background: linear-gradient(#fb4545, #de2a2a); border: 1px solid #c51b1b; border-bottom: 0; text-align: center; line-height: 16px; font-size: 10px; box-shadow: inset 0 -1px #b51515; }
.vol { display: flex; width: 79px; height: 16px; background: #fff; border: 1px solid #b5b5b5; color: #333; }
.spin { width: 15px; background: #ededed; display: flex; align-items: center; justify-content: center; border-right: 1px solid #bbb; }
.spin:last-child { border-right: 0; border-left: 1px solid #bbb; }
.vol .num { flex: 1; text-align: right; padding-right: 4px; line-height: 14px; font-size: 10px; letter-spacing: -.4px; }
.tri { width: 0; height: 0; }
.upward { transform: rotate(180deg); }
.trade-low { display: flex; justify-content: space-between; }
.px { width: 77px; height: 29px; background: linear-gradient(#da2323, #ab0303); border: 1px solid #b80f0f; border-top: 0; display: flex; align-items: flex-end; padding: 0 0 4px 10px; }
.px b { font: bold 10.500px/9px "Open Sans", sans-serif; letter-spacing: -.3px; }
.big { font-size: 25px; line-height: 18px; margin-left: 3px; letter-spacing: -.9px; }
.px sup { font: bold 9.500px/10px "Open Sans", sans-serif; margin: 0 0 10px 4px; }
.chart-tabs { height: 17.500px; border-top: 1px solid #777; border-bottom: 1px solid #ddd; border-left: 1px solid #777; display: flex; align-items: flex-start; color: #888; padding-left: 2px; letter-spacing: -.15px; margin-left: 1px; }
.ct { margin-top: 3px; height: 12px; line-height: 12px; }
.ct.active { margin-top: 0; width: 80px; height: 16px; line-height: 15px; background: #fff; border: 1px solid #444; border-top: 0; text-align: center; color: #111; }
.c-b { width: 75px; padding-left: 11px; border-right: 1px solid #888; letter-spacing: -.3px; }
.c-c { width: 65px; padding-left: 10px; border-right: 1px solid #888; letter-spacing: -.4px; }
.tab-arrows { margin: 5px 6px 0 auto; }
.status { flex: 1; display: flex; align-items: center; padding: 2px 0 0; border-bottom: 1px solid #dcdcdc; font-size: 10px; letter-spacing: -.25px; }
.help { width: 1023px; padding-left: 1px; }
.cell { height: 15px; line-height: 15px; border-left: 1px solid #ccc; padding-left: 4px; flex: none; }
.ping { display: flex; align-items: center; gap: 3px; letter-spacing: -.35px; padding-left: 3px; }
.dialog { position: absolute; left: 621px; top: 251px; width: 358px; height: 359px; background: #f0f0f0; box-shadow: 0 2px 12px rgba(0, 0, 0, .36), 0 0 1px #888; font-family: "DejaVu Sans Condensed", "DejaVu Sans", sans-serif; font-size: 9.200px; color: #333; letter-spacing: -.15px; }
.dlg-title { height: 25px; background: #fff; display: flex; align-items: center; padding: 0 0 1px 7px; }
.dlg-name { font: 10.300px "Open Sans", sans-serif; letter-spacing: -.45px; margin-left: 4px; width: 206px; color: #222; }
.q { font: 600 12px "Open Sans", sans-serif; margin-left: 57px; width: 35px; color: #222; }
.list { margin: 7px 0 0 7px; width: 345px; height: 292px; border: 1px solid #8a94a0; background: #fff; display: flex; padding: 1px; }
.rows { width: 328px; }
.row { display: flex; height: 16.730px; border-bottom: 1px solid #c8c8c8; }
.row:first-child { height: 16.200px; }
.alt { background: #ebebeb; }
.row span { height: 100%; display: flex; align-items: center; }
.r1 { width: 129px; gap: 1.500px; padding-left: 1px; }
.head .r1 { padding-left: 2px; }
.rv { flex: 1; border-left: 1px solid #c8c8c8; justify-content: flex-end; padding-right: 3.500px; }
.r2 { width: 98px; border-left: 1px solid #c8c8c8; padding-left: 2px; }
.r3 { flex: 1; border-left: 1px solid #c8c8c8; padding-left: 2px; }
.head { font-weight: bold; color: #111; }
.glyph { font: bold 7.500px "Liberation Sans", sans-serif; letter-spacing: 0; }
.dscroll { width: 14px; background: #f0f0f0; display: flex; flex-direction: column; align-items: center; padding: 5px 1px 4px 0; }
.dthumb { width: 12px; height: 111px; background: #cdcdcd; margin: auto 0 4px; }
.close { display: block; margin: 8px 0 0 141px; width: 74px; height: 18px; border: 2px solid #1a78d7; background: #e1e1e1; padding: 0; font: 9.200px/1 "DejaVu Sans Condensed", sans-serif; color: #222; }
.resize { position: absolute; right: 2px; bottom: 2px; }
</style>
